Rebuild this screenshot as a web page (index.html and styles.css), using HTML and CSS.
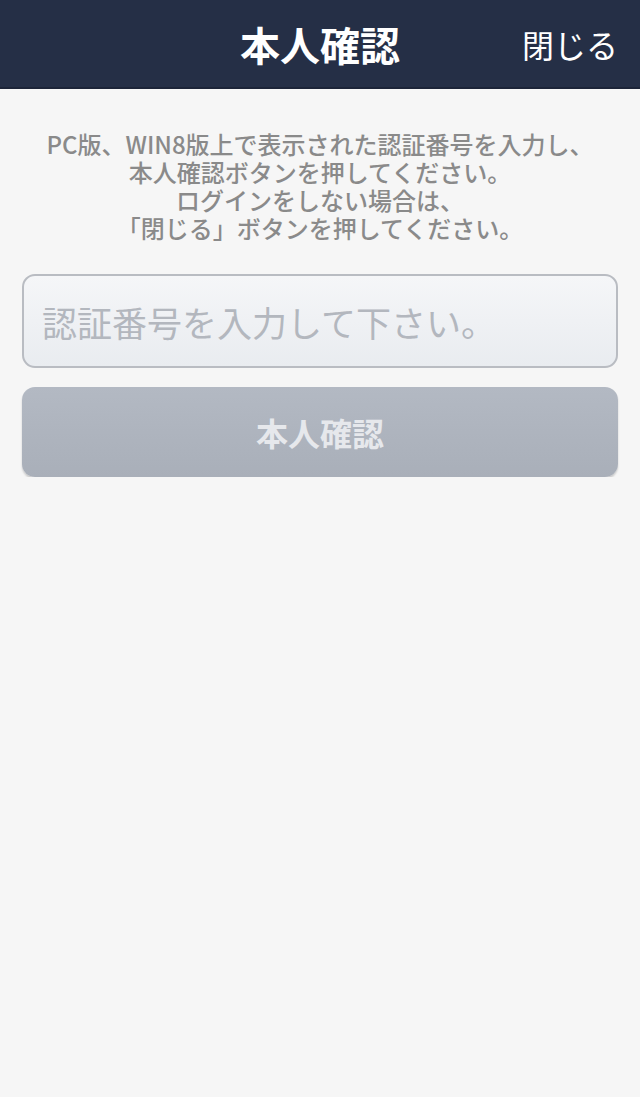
FILE: index.html
```html
<!DOCTYPE html>
<html lang="ja">
<head>
<meta charset="utf-8">
<title>本人確認</title>
<link rel="stylesheet" href="styles.css">
</head>
<body>
<header class="topbar">
  <div class="topbar-side"></div>
  <h1 class="topbar-title">本人確認</h1>
  <div class="topbar-side topbar-right"><button class="close-btn" type="button">閉じる</button></div>
</header>
<main class="content">
  <p class="notice">PC版、WIN8版上で表示された認証番号を入力し、<br>本人確認ボタンを押してください。<br>ログインをしない場合は、<br>「閉じる」ボタンを押してください。</p>
  <input class="code-input" type="text" placeholder="認証番号を入力して下さい。">
  <button class="confirm-btn" type="button" disabled>本人確認</button>
</main>
</body>
</html>
```

FILE: styles.css
```css
html, body {
  margin: 0;
  padding: 0;
  background: #f6f6f6;
  font-family: "Noto Sans CJK JP", "Noto Sans", sans-serif;
}

.topbar {
  display: grid;
  grid-template-columns: 1fr auto 1fr;
  align-items: center;
  height: 87px;
  background: #252f46;
  border-bottom: 2px solid #1c2438;
}

.topbar-title {
  margin: 0;
  color: #ffffff;
  font-size: 40px;
  font-weight: 700;
  line-height: 1;
}

.topbar-right {
  display: flex;
  justify-content: flex-end;
  padding-right: 22px;
}

.close-btn {
  background: none;
  border: 0;
  padding: 0;
  color: #ffffff;
  font-family: inherit;
  font-size: 32px;
  font-weight: 400;
  line-height: 1;
}

.content {
  display: flex;
  flex-direction: column;
  padding: 0 22px;
}

.notice {
  margin: 41px 0 32px;
  text-align: center;
  color: #8a8a8a;
  font-size: 24px;
  font-weight: 500;
  line-height: 28px;
}

.code-input {
  box-sizing: border-box;
  height: 94px;
  width: 100%;
  margin: 0;
  padding: 0 18px;
  border: 2px solid #b9bcc2;
  border-radius: 13px;
  background: linear-gradient(#f5f6f8, #e9ecf0);
  font-family: inherit;
  font-size: 35px;
  color: #555;
  outline: none;
}

.code-input::placeholder {
  color: #b3b7be;
}

.confirm-btn {
  box-sizing: border-box;
  height: 90px;
  width: 100%;
  margin-top: 19px;
  border: 0;
  border-radius: 13px;
  background: linear-gradient(#b3b9c3, #a9afb9);
  box-shadow: 0 2px 2px rgba(0, 0, 0, 0.18);
  color: #e6e8ec;
  font-family: inherit;
  font-size: 32px;
  font-weight: 700;
}
```
